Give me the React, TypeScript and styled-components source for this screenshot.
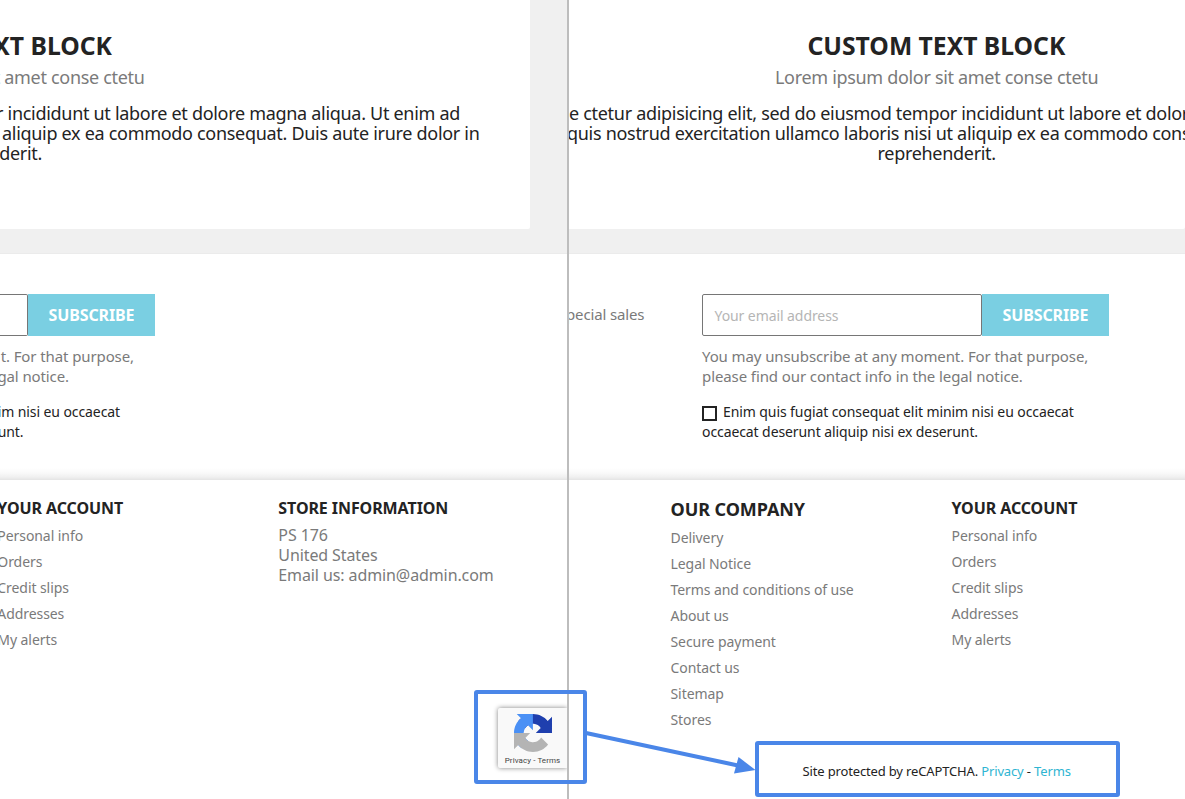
import React from "react";
import styled, { createGlobalStyle } from "styled-components";

const GlobalStyle = createGlobalStyle`
  * { box-sizing: border-box; }
  body { margin: 0; background: #fff; }
  h2, h3, h4, p, ul { margin: 0; padding: 0; }
  ul { list-style: none; }
`;

const Screen = styled.div`
  position: relative;
  display: flex;
  width: 1185px;
  height: 799px;
  overflow: hidden;
  background: #fff;
  color: #232323;
  font-family: "Noto Sans", sans-serif;
`;

const Pane = styled.section<{ $width: number }>`
  display: flex;
  flex-direction: column;
  flex: 0 0 ${(p) => p.$width}px;
  width: ${(p) => p.$width}px;
  overflow: hidden;
`;

const Divider = styled.div`
  flex: 0 0 2px;
  background: #bdbdbd;
`;

const Hero = styled.div`
  height: 254px;
  padding-bottom: 25px;
  background: #f0f0f0;
  border-bottom: 1px solid #ebebeb;
`;

const Card = styled.div<{ $gutter?: number }>`
  height: 229px;
  margin-right: ${(p) => p.$gutter ?? 0}px;
  padding-top: 29px;
  background: #fff;
  border-bottom-right-radius: 2px;
  overflow: hidden;
`;

/* One line of text held at the left ($start) or the right ($end) edge of its block. */
const Line = styled.div<{ $start?: number; $end?: number }>`
  display: flex;
  white-space: nowrap;
  justify-content: ${(p) => (p.$end === undefined ? "flex-start" : "flex-end")};
  margin-left: ${(p) => p.$start ?? 0}px;
  margin-right: ${(p) => p.$end ?? 0}px;
`;

const HeroTitle = styled(Line)`
  height: 32px;
  font-size: 24.7px;
  line-height: 34px;
  font-weight: 700;
`;

const HeroSubtitle = styled(Line)`
  height: 42px;
  padding-top: 6px;
  font-size: 18px;
  line-height: 20px;
  letter-spacing: -0.32px;
  color: #7a7a7a;
`;

const HeroText = styled(Line)`
  height: 20px;
  font-size: 18px;
  line-height: 20px;
  letter-spacing: -0.3px;
`;

const Newsletter = styled.div`
  display: flex;
  height: 226px;
  padding-top: 40px;
  background: linear-gradient(to top, #e4e4e4 0, #f0f0f0 3px, #f9f9f9 7px, #fff 12px);
`;

const Offer = styled.p`
  width: 136px;
  padding-top: 10px;
  margin-left: -3px;
  font-size: 15px;
  line-height: 21px;
  letter-spacing: -0.15px;
  color: #7a7a7a;
  white-space: nowrap;
`;

const Signup = styled.div<{ $end?: boolean }>`
  display: flex;
  flex-direction: column;
  width: ${(p) => (p.$end ? 155 : 407)}px;
`;

const Field = styled.div`
  display: flex;
  height: 42px;
  margin-bottom: 10px;
`;

const EmailBox = styled.div`
  flex: 1;
  padding-left: 11.5px;
  background: #fff;
  border: 1px solid #767676;
  border-radius: 2px;
  font-size: 14px;
  line-height: 42px;
  letter-spacing: -0.08px;
  color: #b5b5b5;
`;

const EmailEnd = styled(EmailBox)`
  padding: 0;
  border-left: 0;
  border-radius: 0 2px 2px 0;
`;

const Subscribe = styled.div`
  width: 127px;
  background: #7acfe2;
  color: #fff;
  font-size: 16px;
  font-weight: 700;
  line-height: 42px;
  letter-spacing: -0.12px;
  text-align: center;
`;

const Notice = styled(Line)`
  height: 20px;
  font-size: 15px;
  line-height: 20px;
  letter-spacing: -0.1px;
  color: #7a7a7a;
`;

const Consent = styled.div`
  padding-top: 16px;
`;

const ConsentLine = styled(Line)`
  height: 20px;
  font-size: 14px;
  line-height: 20px;
  letter-spacing: -0.09px;
`;

const Checkbox = styled.span`
  width: 15px;
  height: 15px;
  margin: 4px 6px 0 0;
  border: 2px solid #232323;
`;

const Footer = styled.footer`
  display: flex;
  flex-direction: column;
  flex: 1;
  padding-top: 18px;
  background: #fff;
`;

const Columns = styled.div<{ $start: number }>`
  display: flex;
  height: 243px;
  padding-left: ${(p) => Math.max(p.$start, 0)}px;
  margin-left: ${(p) => Math.min(p.$start, 0)}px;
`;

const Column = styled.div`
  flex: 0 0 281px;
  white-space: nowrap;
`;

const ColumnTitle = styled.h3<{ $large?: boolean }>`
  height: ${(p) => (p.$large ? 27 : 25)}px;
  font-size: ${(p) => (p.$large ? 18 : 16)}px;
  line-height: ${(p) => (p.$large ? 23 : 20)}px;
  letter-spacing: -0.08px;
  font-weight: 700;
`;

const FooterLink = styled.li`
  height: 26px;
  font-size: 14px;
  line-height: 26px;
  letter-spacing: -0.07px;
  color: #7a7a7a;
`;

const StoreDetails = styled.div`
  padding-top: 2px;
  font-size: 16px;
  line-height: 20px;
  letter-spacing: -0.1px;
  color: #7a7a7a;
`;

const Protection = styled.p`
  padding: 20px 0 0 233.5px;
  font-size: 13px;
  line-height: 20px;
  letter-spacing: -0.15px;
  white-space: nowrap;
`;

const Link = styled.span`
  color: #2fb5d2;
`;

const Badge = styled.div`
  display: flex;
  flex-direction: column;
  align-items: center;
  align-self: flex-end;
  width: 69px;
  height: 60px;
  margin-top: -33px;
  padding-top: 6px;
  background: #f9f9f9;
  border-radius: 2px 0 0 2px;
  box-shadow: 0 0 5px gray;
`;

const BadgeText = styled.span`
  margin-top: 4px;
  font-family: Roboto, sans-serif;
  font-size: 8px;
  line-height: 10px;
  letter-spacing: 0.08px;
  color: #444;
  white-space: nowrap;
`;

const Annotation = styled.svg`
  position: absolute;
  inset: 0;
`;

const accountLinks = ["Personal info", "Orders", "Credit slips", "Addresses", "My alerts"];
const companyLinks = [
  "Delivery",
  "Legal Notice",
  "Terms and conditions of use",
  "About us",
  "Secure payment",
  "Contact us",
  "Sitemap",
  "Stores",
];

function LinkColumn({ title, links, large }: { title: string; links: string[]; large?: boolean }) {
  return (
    <Column>
      <ColumnTitle $large={large}>{title}</ColumnTitle>
      <ul>
        {links.map((l) => (
          <FooterLink key={l}>{l}</FooterLink>
        ))}
      </ul>
    </Column>
  );
}

function CaptchaLogo() {
  return (
    <svg width="38" height="38" viewBox="0 0 64 64">
      <path fill="#1f3fae" d="M64 31.955l-.033-1.37V4.687l-7.16 7.16C50.948 4.674 42.033.093 32.05.093c-10.4 0-19.622 4.96-25.458 12.64l11.736 11.86a15.55 15.55 0 0 1 4.754-5.334c2.05-1.6 4.952-2.906 8.968-2.906.485 0 .86.057 1.135.163 4.976.393 9.288 3.14 11.828 7.124l-8.307 8.307L64 31.953" />
      <path fill="#4a90f5" d="M31.862.094l-1.37.033H4.594l7.16 7.16C4.58 13.147 0 22.06 0 32.046c0 10.4 4.96 19.622 12.64 25.458L24.5 45.768a15.55 15.55 0 0 1-5.334-4.754c-1.6-2.05-2.906-4.952-2.906-8.968 0-.485.057-.86.163-1.135.393-4.976 3.14-9.288 7.124-11.828l8.307 8.307L31.86.095" />
      <path fill="#b4b4b4" d="M.001 32.045l.033 1.37v25.898l7.16-7.16c5.86 7.173 14.774 11.754 24.76 11.754 10.4 0 19.622-4.96 25.458-12.64l-11.736-11.86a15.55 15.55 0 0 1-4.754 5.334c-2.05 1.6-4.952 2.906-8.968 2.906-.485 0-.86-.057-1.135-.163-4.976-.393-9.288-3.14-11.828-7.124l8.307-8.307c-10.522.04-22.4.066-27.295-.005" />
    </svg>
  );
}

function BeforePane() {
  return (
    <Pane $width={567}>
      <Hero>
        <Card $gutter={37}>
          <HeroTitle $end={418}>XT BLOCK</HeroTitle>
          <HeroSubtitle $end={385.5}>t amet conse ctetu</HeroSubtitle>
          <HeroText $end={70}>r incididunt ut labore et dolore magna aliqua. Ut enim ad</HeroText>
          <HeroText $end={50.5}>aliquip ex ea commodo consequat. Duis aute irure dolor in</HeroText>
          <HeroText $end={488}>derit.</HeroText>
        </Card>
      </Hero>
      <Newsletter>
        <Signup $end>
          <Field>
            <EmailEnd />
            <Subscribe>SUBSCRIBE</Subscribe>
          </Field>
          <Notice $end={21}>t. For that purpose,</Notice>
          <Notice $end={86}>gal notice.</Notice>
          <Consent>
            <ConsentLine $end={35}>im nisi eu occaecat</ConsentLine>
            <ConsentLine $end={131.5}>unt.</ConsentLine>
          </Consent>
        </Signup>
      </Newsletter>
      <Footer>
        <Columns $start={-2.7}>
          <LinkColumn title="YOUR ACCOUNT" links={accountLinks} />
          <Column>
            <ColumnTitle>STORE INFORMATION</ColumnTitle>
            <StoreDetails>
              <p>PS 176</p>
              <p>United States</p>
              <p>Email us: admin@admin.com</p>
            </StoreDetails>
          </Column>
        </Columns>
        <Badge>
          <CaptchaLogo />
          <BadgeText>Privacy - Terms</BadgeText>
        </Badge>
      </Footer>
    </Pane>
  );
}

function AfterPane() {
  return (
    <Pane $width={616}>
      <Hero>
        <Card>
          <HeroTitle $start={238.5}>CUSTOM TEXT BLOCK</HeroTitle>
          <HeroSubtitle $start={206}>Lorem ipsum dolor sit amet conse ctetu</HeroSubtitle>
          <HeroText>e ctetur adipisicing elit, sed do eiusmod tempor incididunt ut labore et dolore</HeroText>
          <HeroText $start={-2}>quis nostrud exercitation ullamco laboris nisi ut aliquip ex ea commodo cons</HeroText>
          <HeroText $start={308.5}>reprehenderit.</HeroText>
        </Card>
      </Hero>
      <Newsletter>
        <Offer>pecial sales</Offer>
        <Signup>
          <Field>
            <EmailBox>Your email address</EmailBox>
            <Subscribe>SUBSCRIBE</Subscribe>
          </Field>
          <Notice>You may unsubscribe at any moment. For that purpose,</Notice>
          <Notice>please find our contact info in the legal notice.</Notice>
          <Consent>
            <ConsentLine>
              <Checkbox />
              Enim quis fugiat consequat elit minim nisi eu occaecat
            </ConsentLine>
            <ConsentLine>occaecat deserunt aliquip nisi ex deserunt.</ConsentLine>
          </Consent>
        </Signup>
      </Newsletter>
      <Footer>
        <Columns $start={101.5}>
          <LinkColumn title="OUR COMPANY" links={companyLinks} large />
          <LinkColumn title="YOUR ACCOUNT" links={accountLinks} />
        </Columns>
        <Protection>
          Site protected by reCAPTCHA. <Link>Privacy</Link> - <Link>Terms</Link>
        </Protection>
      </Footer>
    </Pane>
  );
}

export default function App() {
  return (
    <Screen>
      <GlobalStyle />
      <BeforePane />
      <Divider />
      <AfterPane />
      <Annotation width="1185" height="799" fill="none" stroke="#4a86e8" strokeWidth="4">
        <rect x="476" y="692" width="109" height="90" rx="1" />
        <rect x="757" y="743" width="361" height="52" rx="1" />
        <path d="M586 733L738 765.5" />
        <path d="M738.5 757L755.5 770L734 773.5Z" fill="#4a86e8" stroke="none" />
      </Annotation>
    </Screen>
  );
}
